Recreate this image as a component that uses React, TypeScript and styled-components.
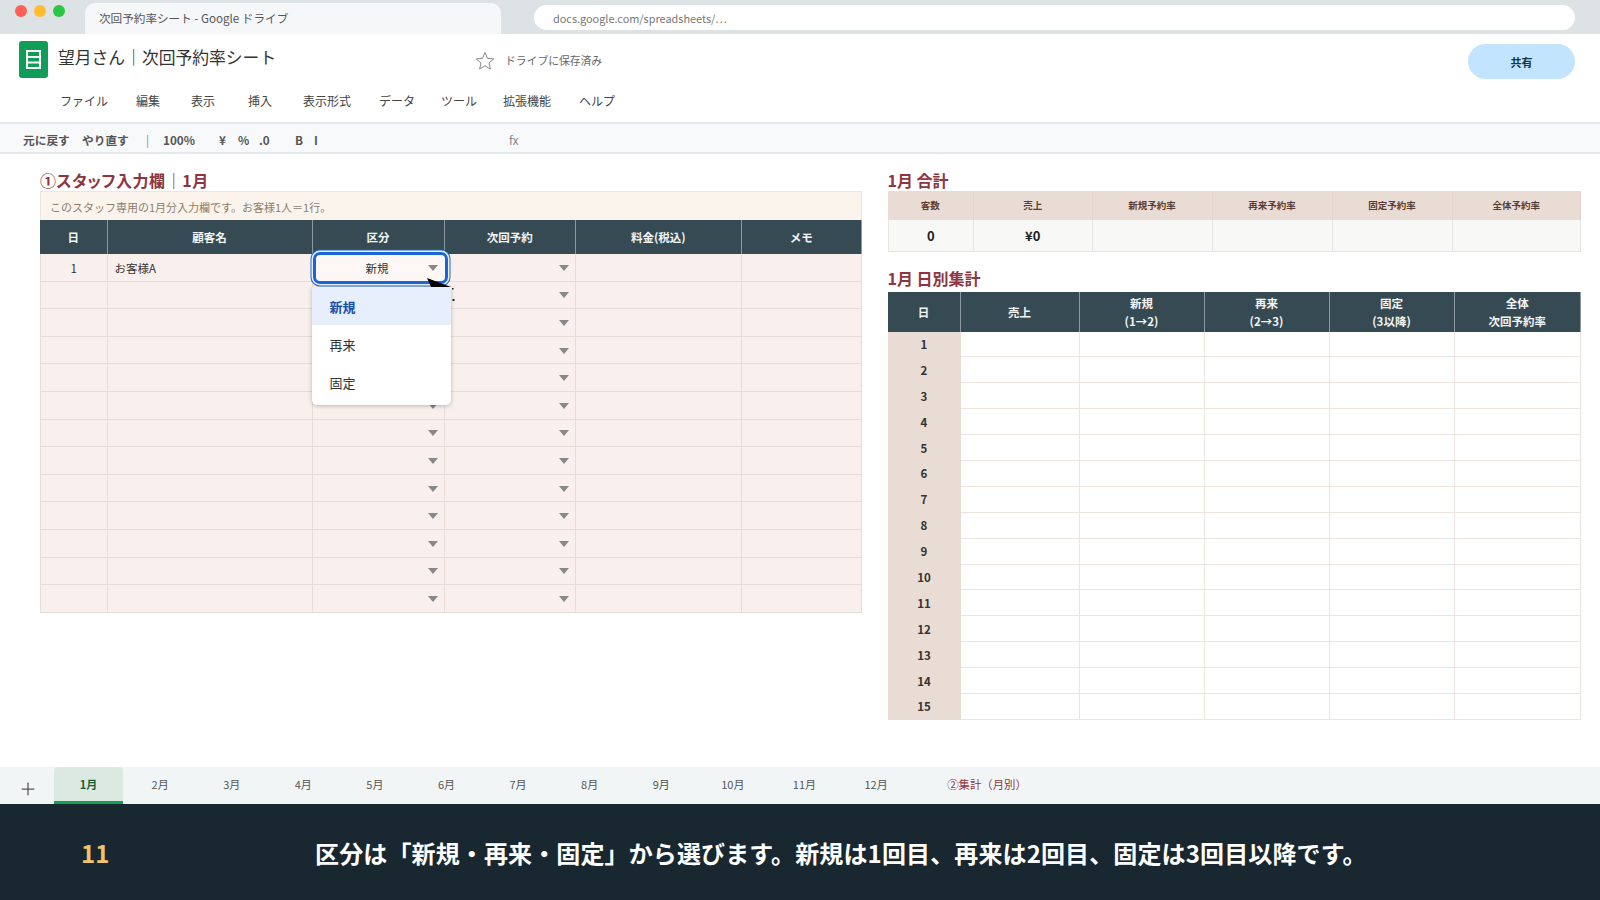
import React from 'react';
import styled, { createGlobalStyle } from 'styled-components';
import { Plus } from 'lucide-react';

const GlobalStyle = createGlobalStyle`
	html, body {
		margin: 0;
		padding: 0;
		background: #fff;
		font-family: 'Noto Sans CJK JP', 'Noto Sans', sans-serif;
	}
	* {
		box-sizing: border-box;
	}
`;

const Page = styled.div`
	width: 1600px;
	height: 900px;
	display: flex;
	flex-direction: column;
	overflow: hidden;
	background: #fff;
`;

/* browser chrome */
const BrowserBar = styled.div`
	height: 34px;
	flex: none;
	background: #dde2e4;
	display: flex;
	padding-left: 15px;
`;
const Lights = styled.div`
	display: flex;
	gap: 7px;
	padding-top: 5px;
	width: 70px;
`;
const Light = styled.span<{ $color: string }>`
	width: 12px;
	height: 12px;
	border-radius: 50%;
	background: ${(p) => p.$color};
`;
const BrowserTab = styled.div`
	width: 416px;
	height: 31px;
	margin-top: 3px;
	background: #f5f7f9;
	border-radius: 10px 10px 0 0;
	padding: 0 0 2px 14px;
	display: flex;
	align-items: center;
	font-size: 11.6px;
	color: #555;
`;
const AddressBar = styled.div`
	width: 1041px;
	height: 25px;
	margin: 5px 0 0 33px;
	background: #fff;
	border-radius: 13px;
	padding-left: 19px;
	display: flex;
	align-items: center;
	font-size: 10.9px;
	color: #777;
`;

/* sheet header */
const Header = styled.div`
	height: 90px;
	flex: none;
	border-bottom: 2px solid #e6e9ed;
`;
const TitleRow = styled.div`
	height: 50px;
	display: flex;
	align-items: center;
	padding: 0 25px 0 19px;
`;
const SheetIcon = styled.svg`
	width: 29px;
	height: 37px;
	flex: none;
`;
const DocTitle = styled.div`
	width: 417px;
	margin: 0 0 4px 10px;
	font-size: 16.8px;
	color: #333;
	white-space: nowrap;
`;
const StarIcon = styled.svg`
	width: 20px;
	height: 19px;
	margin-top: 2px;
	flex: none;
`;
const SavedText = styled.span`
	margin: 1px 0 0 10px;
	font-size: 10.8px;
	color: #666;
`;
const ShareButton = styled.div`
	margin: 5px 0 0 auto;
	width: 107px;
	height: 35px;
	border-radius: 18px;
	background: #c2e5fd;
	display: flex;
	align-items: center;
	justify-content: center;
	font-size: 11px;
	font-weight: 700;
	color: #12384f;
`;
const MenuRow = styled.div`
	height: 32px;
	display: flex;
	align-items: center;
	padding-left: 60px;
`;
const MenuItem = styled.div<{ $w: number }>`
	width: ${(p) => p.$w}px;
	font-size: 12px;
	color: #444;
	white-space: nowrap;
`;

const Toolbar = styled.div`
	height: 30px;
	flex: none;
	background: #f8f9fb;
	border-bottom: 2px solid #e6e9ed;
	display: flex;
	align-items: center;
	padding: 2px 0 0 23px;
`;
const ToolItem = styled.div<{ $w: number; $light?: boolean }>`
	width: ${(p) => p.$w}px;
	font-size: 11.7px;
	font-weight: ${(p) => (p.$light ? 400 : 700)};
	color: ${(p) => (p.$light ? '#888' : '#555')};
	white-space: nowrap;
`;

/* sheet body */
const Main = styled.div`
	flex: 1;
	display: flex;
	padding: 15px 19px 0 40px;
	gap: 25.5px;
`;
const LeftColumn = styled.div`
	width: 822px;
	flex: none;
`;
const RightColumn = styled.div`
	flex: 1;
`;
const SectionTitle = styled.div<{ $top?: number; $bottom?: number; $spacing?: number }>`
	height: 22px;
	margin-top: ${(p) => p.$top || 0}px;
	margin-bottom: ${(p) => p.$bottom || 0}px;
	font-size: 16px;
	font-weight: 700;
	line-height: 22px;
	color: #8e3540;
	letter-spacing: ${(p) => p.$spacing || 0}px;
	font-feature-settings: 'palt';
	white-space: nowrap;
`;
const Note = styled.div`
	height: 29px;
	background: #faf4ec;
	border: 1px solid #eee6dc;
	border-bottom: none;
	padding: 2px 0 0 9px;
	display: flex;
	align-items: center;
	font-size: 11px;
	color: #8d7d6d;
`;
const Grid = styled.div<{ $cols: string }>`
	display: grid;
	grid-template-columns: ${(p) => p.$cols};
`;
const HeadCell = styled.div<{ $h: number }>`
	height: ${(p) => p.$h}px;
	background: #354a52;
	border-right: 1px solid #8b9aa0;
	color: #f2f4f4;
	font-size: 11.5px;
	font-weight: 700;
	line-height: 18px;
	text-align: center;
	display: flex;
	align-items: center;
	justify-content: center;
	&:last-child {
		border-right: none;
	}
`;
const HeadLabel = styled.span`
	white-space: pre-line;
`;
const EntryCell = styled.div<{ $align?: string }>`
	position: relative;
	height: 27.6px;
	background: #f9f0ed;
	border-right: 1px solid #e6dcd8;
	border-bottom: 1px solid #e6dcd8;
	display: flex;
	align-items: center;
	justify-content: ${(p) => p.$align || 'flex-start'};
	padding: 1px 6px 0;
	font-size: 11.5px;
	color: #333;
	&:nth-child(6n + 1) {
		border-left: 1px solid #e6dcd8;
	}
`;
const DropArrow = styled.span`
	width: 0;
	height: 0;
	border-left: 5px solid transparent;
	border-right: 5px solid transparent;
	border-top: 6px solid #888;
`;
const NameText = styled.span`
	padding-left: 1px;
`;
const SelectBox = styled.div`
	position: absolute;
	left: 0;
	top: -2px;
	width: 135px;
	height: 32px;
	z-index: 2;
	background: #fdf8f5;
	border: 3px solid #1c66d4;
	border-radius: 7px;
	box-shadow: 0 0 0 1.5px #eaf1fb, 0 0 0 2.5px #1c66d4;
	padding-right: 6px;
	display: flex;
	align-items: center;
	justify-content: center;
	font-size: 11.5px;
	color: #333;
	& > span:last-child {
		position: absolute;
		right: 7px;
		top: 10px;
	}
`;
const Cursor = styled.svg`
	position: absolute;
	left: 114px;
	top: 24px;
	width: 30px;
	height: 30px;
	z-index: 3;
`;
const DropdownMenu = styled.div`
	position: absolute;
	left: -1px;
	top: 33px;
	width: 139px;
	z-index: 4;
	background: #fff;
	border-radius: 0 0 5px 5px;
	box-shadow: 0 1px 4px rgba(0, 0, 0, 0.25);
	padding-bottom: 4px;
`;
const DropdownItem = styled.div<{ $active?: boolean }>`
	height: 38px;
	padding-left: 18px;
	display: flex;
	align-items: center;
	font-size: 13px;
	font-weight: ${(p) => (p.$active ? 700 : 400)};
	color: ${(p) => (p.$active ? '#1a4fa8' : '#333')};
	background: ${(p) => (p.$active ? '#e6effb' : '#fff')};
`;

const SummaryHead = styled.div`
	height: 29px;
	background: #e9dcd5;
	border-right: 1px solid #e3d5ce;
	padding-bottom: 1px;
	display: flex;
	align-items: center;
	justify-content: center;
	font-size: 9.5px;
	font-weight: 700;
	color: #5b3c36;
	&:last-child {
		border-right: none;
	}
`;
const SummaryValue = styled.div`
	height: 32px;
	background: #f8f8f6;
	border-right: 1px solid #e8e4df;
	border-bottom: 1px solid #e8e4df;
	display: flex;
	align-items: center;
	justify-content: center;
	font-size: 13px;
	font-weight: 700;
	color: #222;
	&:nth-child(6n + 1) {
		border-left: 1px solid #e8e4df;
	}
`;
const DayCell = styled.div`
	height: 25.9px;
	background: #e8dcd5;
	border-bottom: 1px solid #e8dcd5;
	display: flex;
	align-items: center;
	justify-content: center;
	font-size: 11.5px;
	font-weight: 700;
	color: #333;
`;
const DailyCell = styled.div`
	height: 25.9px;
	background: #fff;
	border-right: 1px solid #ebe4df;
	border-bottom: 1px solid #ebe4df;
`;

/* sheet tabs */
const TabBar = styled.div`
	height: 37px;
	flex: none;
	background: #f2f5f6;
	display: flex;
	padding-left: 54px;
	position: relative;
`;
const AddTab = styled(Plus)`
	position: absolute;
	left: 18px;
	top: 12px;
	color: #555;
`;
const SheetTab = styled.div<{ $active?: boolean }>`
	width: 69px;
	margin-right: 2.6px;
	display: flex;
	align-items: center;
	justify-content: center;
	font-size: 11px;
	font-weight: ${(p) => (p.$active ? 700 : 400)};
	color: ${(p) => (p.$active ? '#13613a' : '#555')};
	background: ${(p) => (p.$active ? '#dce8e2' : 'transparent')};
	border-radius: ${(p) => (p.$active ? '4px 4px 0 0' : '0')};
	border-bottom: 3px solid ${(p) => (p.$active ? '#12a150' : 'transparent')};
`;
const SummaryTab = styled.div`
	margin-left: 34px;
	padding-bottom: 3px;
	display: flex;
	align-items: center;
	font-size: 11.4px;
	color: #8e3540;
`;

/* caption */
const Caption = styled.div`
	height: 96px;
	flex: none;
	background: #182730;
	display: flex;
	align-items: center;
	padding-left: 81px;
	font-weight: 700;
	font-size: 24px;
	color: #fff;
`;
const StepNumber = styled.div`
	width: 234px;
	color: #f0c468;
`;
const CaptionText = styled.div`
	letter-spacing: 0.13px;
`;

const entryCols = '67.5px 205px 132px 131.5px 165.5px 120.5px';
const entryHeads = ['日', '顧客名', '区分', '次回予約', '料金(税込)', 'メモ'];
const summaryCols = '86.5px 118.5px 120px 120px 120px 1fr';
const summaryHeads = ['客数', '売上', '新規予約率', '再来予約率', '固定予約率', '全体予約率'];
const dailyCols = '73px 119px 125px 125px 125px 1fr';
const dailyHeads = ['日', '売上', '新規\n(1→2)', '再来\n(2→3)', '固定\n(3以降)', '全体\n次回予約率'];
const menus: [string, number][] = [
	['ファイル', 76],
	['編集', 55],
	['表示', 57],
	['挿入', 55],
	['表示形式', 76],
	['データ', 62],
	['ツール', 62],
	['拡張機能', 76],
	['ヘルプ', 50]
];
const tools: [string, number, boolean?][] = [
	['元に戻す', 59],
	['やり直す', 64],
	['|', 17, true],
	['100%', 56],
	['¥', 19],
	['%', 21],
	['.0', 36],
	['B', 19],
	['I', 195],
	['fx', 20, true]
];
const months = ['1月', '2月', '3月', '4月', '5月', '6月', '7月', '8月', '9月', '10月', '11月', '12月'];

const App: React.FC = () => {
	return (
		<Page>
			<GlobalStyle />
			<BrowserBar>
				<Lights>
					<Light $color="#ff5f57" />
					<Light $color="#febc2e" />
					<Light $color="#28c840" />
				</Lights>
				<BrowserTab>次回予約率シート - Google ドライブ</BrowserTab>
				<AddressBar>docs.google.com/spreadsheets/…</AddressBar>
			</BrowserBar>

			<Header>
				<TitleRow>
					<SheetIcon viewBox="0 0 29 37">
						<rect width="29" height="37" rx="3" fill="#0f9d58" />
						<rect x="8" y="10" width="13" height="17" fill="none" stroke="#fff" strokeWidth="2" />
						<path d="M8 16h13M8 21.5h13" stroke="#fff" strokeWidth="2" />
					</SheetIcon>
					<DocTitle>望月さん｜次回予約率シート</DocTitle>
					<StarIcon viewBox="0 0 20 19">
						<path
							d="M10 1.5l2.5 5.8 6.2.6-4.7 4.1 1.4 6.1L10 14.9l-5.4 3.2 1.4-6.1-4.7-4.1 6.2-.6z"
							fill="none"
							stroke="#888"
							strokeWidth="1"
						/>
					</StarIcon>
					<SavedText>ドライブに保存済み</SavedText>
					<ShareButton>共有</ShareButton>
				</TitleRow>
				<MenuRow>
					{menus.map(([label, w]) => (
						<MenuItem key={label} $w={w}>
							{label}
						</MenuItem>
					))}
				</MenuRow>
			</Header>

			<Toolbar>
				{tools.map(([label, w, light]) => (
					<ToolItem key={label} $w={w} $light={light}>
						{label}
					</ToolItem>
				))}
			</Toolbar>

			<Main>
				<LeftColumn>
					<SectionTitle $spacing={0.55}>①スタッフ入力欄｜1月</SectionTitle>
					<Note>このスタッフ専用の1月分入力欄です。お客様1人＝1行。</Note>
					<Grid $cols={entryCols}>
						{entryHeads.map((label) => (
							<HeadCell key={label} $h={34}>
								{label}
							</HeadCell>
						))}
						<EntryCell $align="center">1</EntryCell>
						<EntryCell>
							<NameText>お客様A</NameText>
						</EntryCell>
						<EntryCell>
							<SelectBox>
								<span>新規</span>
								<DropArrow />
							</SelectBox>
							<Cursor viewBox="0 0 30 30">
								<path d="M0 0L24 9L12 12L10 22Z" fill="#000" />
								<path d="M25 10h1.5v1.5H25zM25.5 21h2v2h-2z" fill="#222" />
							</Cursor>
							<DropdownMenu>
								<DropdownItem $active>新規</DropdownItem>
								<DropdownItem>再来</DropdownItem>
								<DropdownItem>固定</DropdownItem>
							</DropdownMenu>
						</EntryCell>
						<EntryCell $align="flex-end">
							<DropArrow />
						</EntryCell>
						<EntryCell />
						<EntryCell />
						{Array.from({ length: 12 }).map((_, row) => (
							<React.Fragment key={row}>
								<EntryCell />
								<EntryCell />
								<EntryCell $align="flex-end">
									<DropArrow />
								</EntryCell>
								<EntryCell $align="flex-end">
									<DropArrow />
								</EntryCell>
								<EntryCell />
								<EntryCell />
							</React.Fragment>
						))}
					</Grid>
				</LeftColumn>

				<RightColumn>
					<SectionTitle>1月 合計</SectionTitle>
					<Grid $cols={summaryCols}>
						{summaryHeads.map((label) => (
							<SummaryHead key={label}>{label}</SummaryHead>
						))}
						<SummaryValue>0</SummaryValue>
						<SummaryValue>¥0</SummaryValue>
						<SummaryValue />
						<SummaryValue />
						<SummaryValue />
						<SummaryValue />
					</Grid>
					<SectionTitle $top={15} $bottom={2.5}>
						1月 日別集計
					</SectionTitle>
					<Grid $cols={dailyCols}>
						{dailyHeads.map((label) => (
							<HeadCell key={label} $h={40}>
								<HeadLabel>{label}</HeadLabel>
							</HeadCell>
						))}
						{Array.from({ length: 15 }).map((_, i) => (
							<React.Fragment key={i}>
								<DayCell>{i + 1}</DayCell>
								<DailyCell />
								<DailyCell />
								<DailyCell />
								<DailyCell />
								<DailyCell />
							</React.Fragment>
						))}
					</Grid>
				</RightColumn>
			</Main>

			<TabBar>
				<AddTab size={20} strokeWidth={1.5} />
				{months.map((m, i) => (
					<SheetTab key={m} $active={i === 0}>
						{m}
					</SheetTab>
				))}
				<SummaryTab>②集計（月別）</SummaryTab>
			</TabBar>

			<Caption>
				<StepNumber>11</StepNumber>
				<CaptionText>区分は「新規・再来・固定」から選びます。新規は1回目、再来は2回目、固定は3回目以降です。</CaptionText>
			</Caption>
		</Page>
	);
};

export default App;
